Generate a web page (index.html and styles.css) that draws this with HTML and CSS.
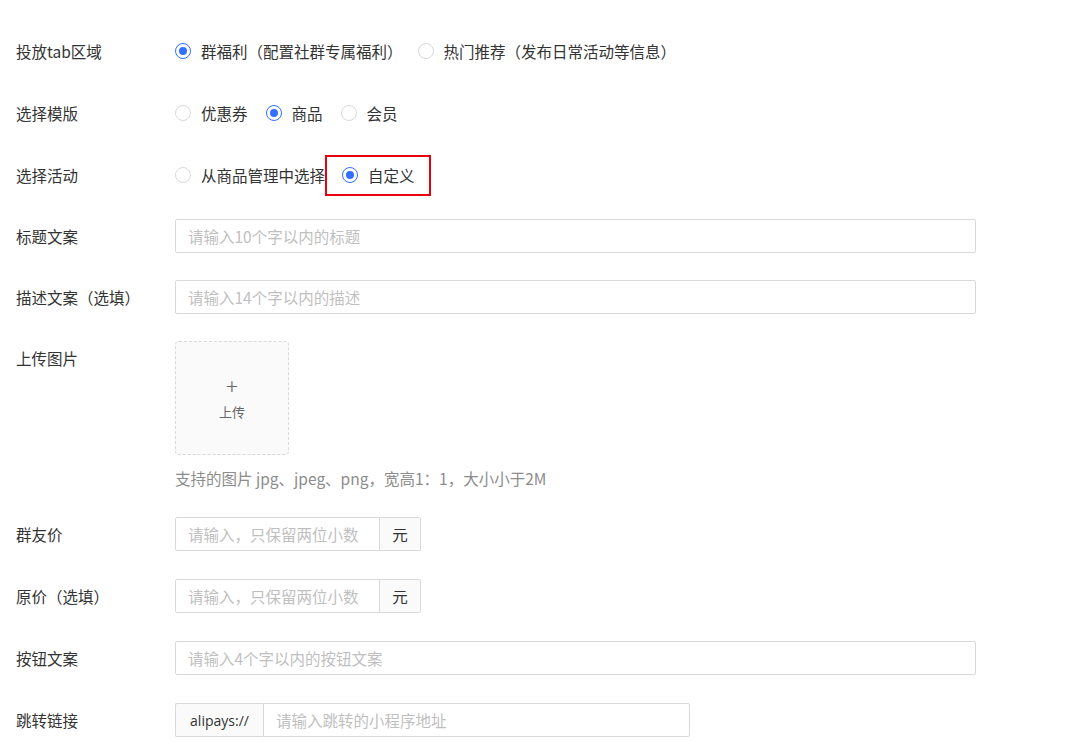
FILE: index.html
```html
<!DOCTYPE html>
<html lang="zh">
<head>
<meta charset="utf-8">
<link rel="stylesheet" href="styles.css">
</head>
<body>
<div class="form">
  <div class="item">
    <div class="label">投放tab区域</div>
    <div class="control radios">
      <label class="radio checked wide-gap"><span class="dot"></span><span class="txt">群福利（配置社群专属福利）</span></label>
      <label class="radio"><span class="dot"></span><span class="txt">热门推荐（发布日常活动等信息）</span></label>
    </div>
  </div>
  <div class="item">
    <div class="label">选择模版</div>
    <div class="control radios">
      <label class="radio"><span class="dot"></span><span class="txt">优惠券</span></label>
      <label class="radio checked"><span class="dot"></span><span class="txt">商品</span></label>
      <label class="radio"><span class="dot"></span><span class="txt">会员</span></label>
    </div>
  </div>
  <div class="item short">
    <div class="label">选择活动</div>
    <div class="control radios">
      <label class="radio tight"><span class="dot"></span><span class="txt">从商品管理中选择</span></label>
      <div class="highlight">
        <label class="radio checked"><span class="dot"></span><span class="txt">自定义</span></label>
      </div>
    </div>
  </div>
  <div class="item short">
    <div class="label">标题文案</div>
    <div class="control"><div class="input wide"><span class="ph">请输入10个字以内的标题</span></div></div>
  </div>
  <div class="item short">
    <div class="label">描述文案（选填）</div>
    <div class="control"><div class="input wide"><span class="ph">请输入14个字以内的描述</span></div></div>
  </div>
  <div class="item">
    <div class="label">上传图片</div>
    <div class="control col">
      <div class="upload">
        <span class="plus">+</span>
        <span class="up-txt">上传</span>
      </div>
      <div class="help">支持的图片 jpg、jpeg、png，宽高1：1，大小小于2M</div>
    </div>
  </div>
  <div class="item">
    <div class="label">群友价</div>
    <div class="control"><div class="group"><div class="input g-in"><span class="ph">请输入，只保留两位小数</span></div><div class="addon after">元</div></div></div>
  </div>
  <div class="item">
    <div class="label">原价（选填）</div>
    <div class="control"><div class="group"><div class="input g-in"><span class="ph">请输入，只保留两位小数</span></div><div class="addon after">元</div></div></div>
  </div>
  <div class="item">
    <div class="label">按钮文案</div>
    <div class="control"><div class="input wide"><span class="ph">请输入4个字以内的按钮文案</span></div></div>
  </div>
  <div class="item">
    <div class="label">跳转链接</div>
    <div class="control"><div class="group"><div class="addon before">alipays://</div><div class="input g-in2"><span class="ph">请输入跳转的小程序地址</span></div></div></div>
  </div>
</div>
</body>
</html>
```

FILE: styles.css
```css
* { box-sizing: border-box; }
html, body { margin: 0; padding: 0; background: #fff; }
body {
  font-family: "Noto Sans CJK SC", "Microsoft YaHei", sans-serif;
  font-size: 15.5px;
  color: #333;
}
.form { padding: 34px 0 0 16px; }
.item {
  display: flex;
  align-items: flex-start;
  margin-bottom: 28px;
  min-height: 34px;
}
.item.short { margin-bottom: 27px; }
.label {
  width: 159px;
  flex: none;
  height: 34px;
  line-height: 34px;
  color: #333;
}
.control { display: flex; align-items: center; min-height: 34px; }
.control.col { flex-direction: column; align-items: flex-start; }
.radios { height: 34px; }
.radio {
  display: flex;
  align-items: center;
  margin-right: 18px;
  line-height: 22px;
  color: #333;
}
.radio.wide-gap { margin-right: 15px; }
.radio.tight { margin-right: 0; }
.dot {
  width: 16px;
  height: 16px;
  border: 1px solid #d9d9d9;
  border-radius: 50%;
  background: #fff;
  flex: none;
  position: relative;
}
.radio.checked .dot { border-color: #3370ff; }
.radio.checked .dot::after {
  content: "";
  position: absolute;
  left: 3px; top: 3px;
  width: 8px; height: 8px;
  border-radius: 50%;
  background: #3370ff;
}
.txt { margin-left: 10px; }
.highlight {
  display: flex;
  align-items: center;
  border: 2px solid #e8000d;
  height: 41px;
  padding: 0 0 0 15px;
  width: 106px;
}
.highlight .radio { margin-right: 0; }
.input {
  height: 34px;
  border: 1px solid #d9d9d9;
  border-radius: 2px;
  background: #fff;
  display: flex;
  align-items: center;
  padding: 0 12px;
}
.input.wide { width: 801px; }
.ph { color: #bfbfbf; white-space: nowrap; }
.upload {
  width: 114px;
  height: 114px;
  border: 1px dashed #d9d9d9;
  border-radius: 4px;
  background: #fafafa;
  display: flex;
  flex-direction: column;
  align-items: center;
  justify-content: center;
  color: #666;
}
.plus { font-size: 22px; line-height: 22px; font-weight: 300; color: #666; }
.up-txt { font-size: 13px; line-height: 20px; margin-top: 6px; color: #666; }
.help {
  margin-top: 12px;
  line-height: 22px;
  color: #8c8c8c;
}
.group { display: flex; height: 34px; }
.addon {
  height: 34px;
  border: 1px solid #d9d9d9;
  background: #fafafa;
  display: flex;
  align-items: center;
  justify-content: center;
  color: #333;
}
.addon.after { width: 41px; border-left: 0; border-radius: 0 2px 2px 0; }
.addon.before { width: 88px; border-right: 0; border-radius: 2px 0 0 2px; font-family: "Open Sans", "Noto Sans", sans-serif; font-size: 14px; }
.g-in { width: 205px; border-radius: 2px 0 0 2px; }
.g-in2 { width: 427px; border-radius: 0 2px 2px 0; }
```
